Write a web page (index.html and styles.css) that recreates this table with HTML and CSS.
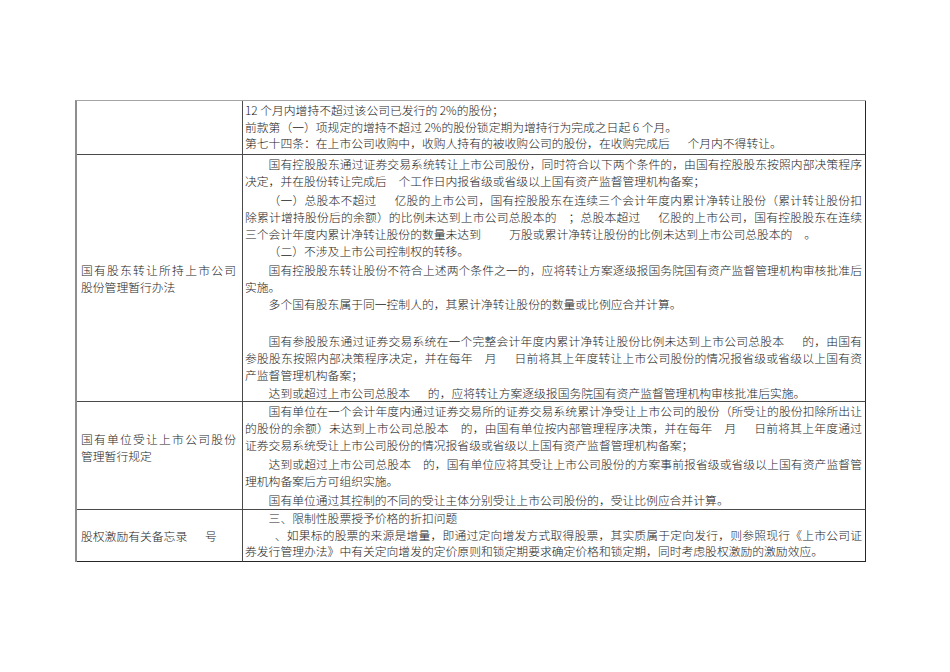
FILE: index.html
```html
<!DOCTYPE html>
<html lang="zh-CN">
<head>
<meta charset="utf-8">
<title>国有股份管理规定</title>
<link rel="stylesheet" href="styles.css">
</head>
<body>
<div class="page">
  <div class="doc">
    <div class="cell label"></div>
    <div class="cell body r-tight">
      <p>12 个月内增持不超过该公司已发行的 2%的股份；</p>
      <p>前款第（一）项规定的增持不超过 2%的股份锁定期为增持行为完成之日起 6 个月。</p>
      <p>第七十四条：在上市公司收购中，收购人持有的被收购公司的股份，在收购完成后<span class="gap-m"></span>个月内不得转让。</p>
    </div>

    <div class="cell label">
      <div class="label-text">
        <span class="lbl-full">国有股东转让所持上市公司</span>
        <span class="lbl-last">股份管理暂行办法</span>
      </div>
    </div>
    <div class="cell body r-loose">
      <p class="ind">国有控股股东通过证券交易系统转让上市公司股份，同时符合以下两个条件的，由国有控股股东按照内部决策程序决定，并在股份转让完成后<span class="gap-s"></span>个工作日内报省级或省级以上国有资产监督管理机构备案；</p>
      <p class="ind sp2">（一）总股本不超过<span class="gap-m"></span>亿股的上市公司，国有控股股东在连续三个会计年度内累计净转让股份（累计转让股份扣除累计增持股份后的余额）的比例未达到上市公司总股本的<span class="gap-s"></span>；总股本超过<span class="gap-m"></span>亿股的上市公司，国有控股股东在连续三个会计年度内累计净转让股份的数量未达到<span class="gap-l"></span>万股或累计净转让股份的比例未达到上市公司总股本的<span class="gap-s"></span>。</p>
      <p class="ind">（二）不涉及上市公司控制权的转移。</p>
      <p class="ind sp2">国有控股股东转让股份不符合上述两个条件之一的，应将转让方案逐级报国务院国有资产监督管理机构审核批准后实施。</p>
      <p class="ind">多个国有股东属于同一控制人的，其累计净转让股份的数量或比例应合并计算。</p>
      <p class="ind sp-blank">国有参股股东通过证券交易系统在一个完整会计年度内累计净转让股份比例未达到上市公司总股本<span class="gap-m"></span>的，由国有参股股东按照内部决策程序决定，并在每年<span class="gap-s"></span>月<span class="gap-m"></span>日前将其上年度转让上市公司股份的情况报省级或省级以上国有资产监督管理机构备案；</p>
      <p class="ind sp1">达到或超过上市公司总股本<span class="gap-m"></span>的，应将转让方案逐级报国务院国有资产监督管理机构审核批准后实施。</p>
    </div>

    <div class="cell label label-raised">
      <div class="label-text">
        <span class="lbl-full">国有单位受让上市公司股份</span>
        <span class="lbl-last">管理暂行规定</span>
      </div>
    </div>
    <div class="cell body r-loose r-pad">
      <p class="ind">国有单位在一个会计年度内通过证券交易所的证券交易系统累计净受让上市公司的股份（所受让的股份扣除所出让的股份的余额）未达到上市公司总股本<span class="gap-s"></span>的，由国有单位按内部管理程序决策，并在每年<span class="gap-s"></span>月<span class="gap-m"></span>日前将其上年度通过证券交易系统受让上市公司股份的情况报省级或省级以上国有资产监督管理机构备案；</p>
      <p class="ind sp2">达到或超过上市公司总股本<span class="gap-s"></span>的，国有单位应将其受让上市公司股份的方案事前报省级或省级以上国有资产监督管理机构备案后方可组织实施。</p>
      <p class="ind sp2">国有单位通过其控制的不同的受让主体分别受让上市公司股份的，受让比例应合并计算。</p>
    </div>

    <div class="cell label last">
      <div class="label-text">
        <span class="lbl-last">股权激励有关备忘录<span class="gap-m"></span>号</span>
      </div>
    </div>
    <div class="cell body r-tight r-end last">
      <p class="ind">三、限制性股票授予价格的折扣问题</p>
      <p class="ind"><span class="gap-xs"></span>、如果标的股票的来源是增量，即通过定向增发方式取得股票，其实质属于定向发行，则参照现行《上市公司证券发行管理办法》中有关定向增发的定价原则和锁定期要求确定价格和锁定期，同时考虑股权激励的激励效应。</p>
    </div>
  </div>
</div>
</body>
</html>
```

FILE: styles.css
```css
html, body {
  margin: 0;
  padding: 0;
  background: #ffffff;
}

.page {
  padding: 100px 0 0 75px;
  font-family: "Noto Sans CJK SC", "Noto Sans", sans-serif;
  font-size: 11.8px;
  font-weight: 300;
  color: #1c1c1c;
}

.doc {
  display: grid;
  grid-template-columns: 166px 623px;
  width: 789px;
  border-left: 2px solid #8e8e8e;
  border-top: 1px solid #a4a4a4;
}

.cell {
  border-bottom: 1px solid #4a4a4a;
  box-sizing: border-box;
}

.label {
  border-right: 1px solid #4a4a4a;
  padding: 0 6px 0 4px;
  display: flex;
  flex-direction: column;
  justify-content: center;
}

.label-raised {
  padding-bottom: 18px;
}

.label-text {
  line-height: 17px;
}

.lbl-full {
  display: block;
  text-align: justify;
  text-align-last: justify;
}

.lbl-last {
  display: block;
}

.body {
  border-right: 1px solid #262626;
  padding: 0 3px 0 2px;
  text-align: justify;
}

.body p {
  margin: 0;
}

.r-tight {
  line-height: 16.5px;
  padding-top: 1px;
  padding-bottom: 2.5px;
}

.r-end {
  padding-top: 0;
  padding-bottom: 1.5px;
}

.r-loose {
  line-height: 17px;
}

.r-pad {
  padding-bottom: 1px;
}

.ind {
  text-indent: 2em;
}

.sp1 {
  margin-top: 1px !important;
}

.sp2 {
  margin-top: 2px !important;
}

.sp-blank {
  margin-top: 20px !important;
}

.last {
  border-bottom-color: #262626;
}

.gap-xs,
.gap-s,
.gap-m,
.gap-l {
  display: inline-block;
  text-indent: 0;
}

.gap-xs {
  width: 0.5em;
}

.gap-s {
  width: 1em;
}

.gap-m {
  width: 1.5em;
}

.gap-l {
  width: 2.4em;
}
```
